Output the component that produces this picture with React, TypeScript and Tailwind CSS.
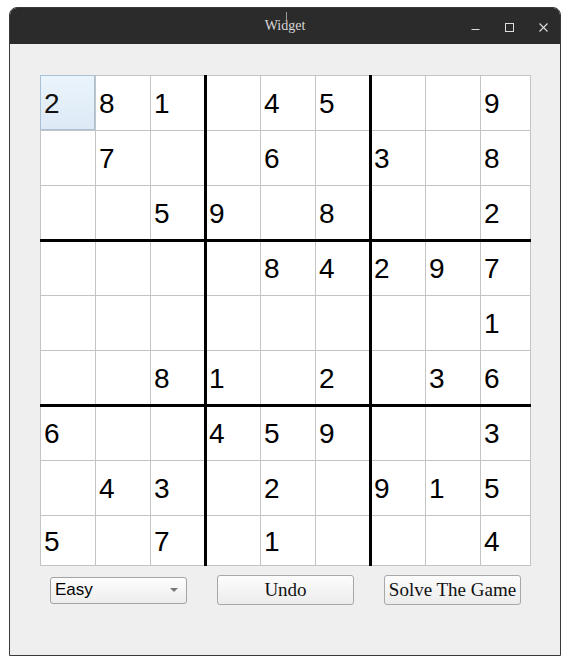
import React from "react";

const puzzle: (number | null)[][] = [
  [2, 8, 1, null, 4, 5, null, null, 9],
  [null, 7, null, null, 6, null, 3, null, 8],
  [null, null, 5, 9, null, 8, null, null, 2],
  [null, null, null, null, 8, 4, 2, 9, 7],
  [null, null, null, null, null, null, null, null, 1],
  [null, null, 8, 1, null, 2, null, 3, 6],
  [6, null, null, 4, 5, 9, null, null, 3],
  [null, 4, 3, null, 2, null, 9, 1, 5],
  [5, null, 7, null, 1, null, null, null, 4],
];

export default function App() {
  return (
    <div className="min-h-[665px] w-[571px] bg-white pt-[7px] pl-[9px]">
      <div className="w-[552px] h-[649px] rounded-t-[8px] border border-[#3a3a3a] bg-[#efefef] overflow-hidden flex flex-col">
        {/* Title bar */}
        <div className="relative h-[36px] bg-[#2b2b2b] flex items-center justify-end pr-[12px] shrink-0">
          <div
            className="absolute inset-0 flex items-center justify-center text-[14px] text-[#d8d8d8] pb-[2px]"
            style={{ fontFamily: '"Liberation Serif", serif' }}
          >
            Widget
          </div>
          <div className="absolute left-[276px] top-[4px] w-px h-[11px] bg-[#9a9a9a]" />
          <div className="relative flex items-center gap-[25px] pt-[2px]">
            <svg width="9" height="9" viewBox="0 0 9 9">
              <line x1="0.5" y1="6.5" x2="8.5" y2="6.5" stroke="#dedede" strokeWidth="1" />
            </svg>
            <svg width="9" height="9" viewBox="0 0 9 9">
              <rect x="0.5" y="0.5" width="8" height="8" fill="none" stroke="#dedede" strokeWidth="1" />
            </svg>
            <svg width="9" height="9" viewBox="0 0 9 9">
              <line x1="0.5" y1="0.5" x2="8.5" y2="8.5" stroke="#dedede" strokeWidth="1.1" />
              <line x1="8.5" y1="0.5" x2="0.5" y2="8.5" stroke="#dedede" strokeWidth="1.1" />
            </svg>
          </div>
        </div>

        {/* Body */}
        <div className="pl-[30px] pt-[31px]">
          <div
            className="relative w-[491px] h-[491px] grid grid-cols-[repeat(8,55px)_50px] grid-rows-[repeat(8,55px)_50px] border-r border-b border-[#c4c4c4] bg-white"
            style={{ fontFamily: '"Liberation Sans", Arial, sans-serif' }}
          >
            {puzzle.map((row, r) =>
              row.map((v, c) => {
                const sel = r === 0 && c === 0;
                return (
                  <div
                    key={`${r}-${c}`}
                    className={
                      sel
                        ? "flex items-center pl-[3px] border-l border-t border-[#a9c1d7] shadow-[inset_-1px_-1px_0_#a9c1d7] bg-gradient-to-b from-[#eaf4fc] to-[#dde9f5] text-[28px] text-[#111]"
                        : "flex items-center pl-[3px] border-l border-t border-[#c4c4c4] text-[28px] text-black"
                    }
                  >
                    <span className="leading-none pt-[2px]">{v ?? ""}</span>
                  </div>
                );
              })
            )}
            <div className="absolute left-[164px] top-0 w-[3px] h-[491px] bg-black" />
            <div className="absolute left-[329px] top-0 w-[3px] h-[491px] bg-black" />
            <div className="absolute top-[164px] left-0 h-[3px] w-[491px] bg-black" />
            <div className="absolute top-[329px] left-0 h-[3px] w-[491px] bg-black" />
          </div>

          {/* Controls */}
          <div className="mt-[9px] pl-[10px] flex items-center gap-[30px] h-[30px]">
            <div
              className="w-[137px] h-[27px] rounded-[3px] border border-[#a3a3a3] bg-gradient-to-b from-[#fdfdfd] to-[#ededed] flex items-center justify-between pl-[4px] pr-[8px] text-[17px] text-black"
              style={{ fontFamily: '"Liberation Sans", Arial, sans-serif' }}
            >
              <span>Easy</span>
              <svg width="8" height="5" viewBox="0 0 8 5">
                <polygon points="0,0 8,0 4,4" fill="#777" />
              </svg>
            </div>
            <div
              className="w-[137px] h-[30px] rounded-[3px] border border-[#a8a8a8] bg-gradient-to-b from-[#fcfcfc] to-[#ececec] flex items-center justify-center text-[19px] text-[#111]"
              style={{ fontFamily: '"Liberation Serif", serif' }}
            >
              Undo
            </div>
            <div
              className="w-[137px] h-[30px] rounded-[3px] border border-[#a8a8a8] bg-gradient-to-b from-[#fcfcfc] to-[#ececec] flex items-center justify-center text-[19px] text-[#111] whitespace-nowrap"
              style={{ fontFamily: '"Liberation Serif", serif' }}
            >
              Solve The Game
            </div>
          </div>
        </div>
      </div>
    </div>
  );
}
